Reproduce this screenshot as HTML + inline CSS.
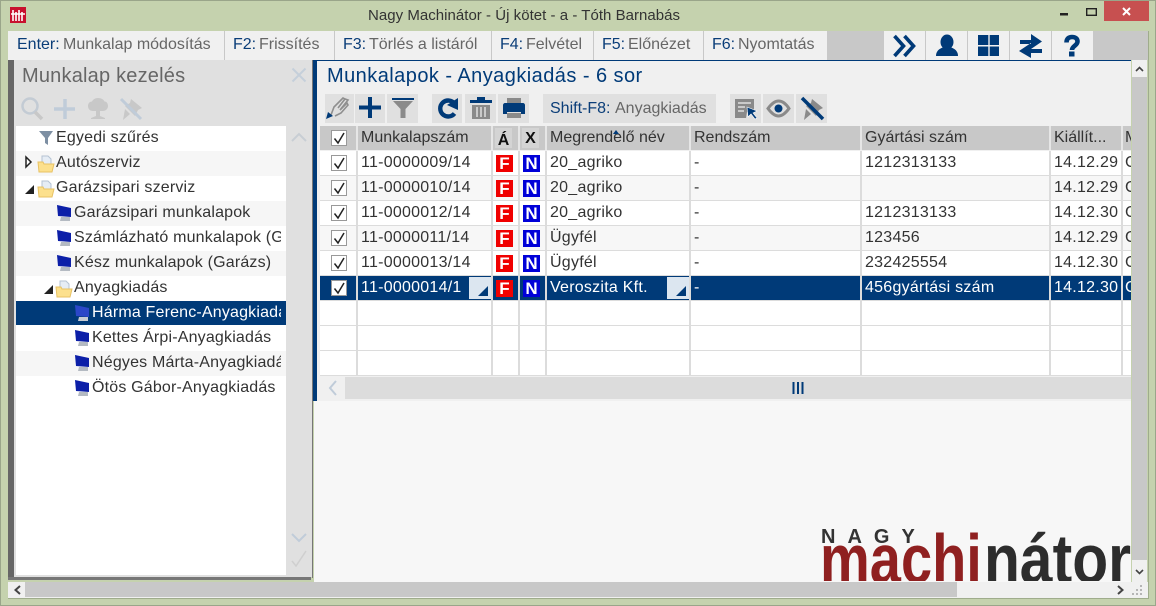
<!DOCTYPE html>
<html lang="hu"><head><meta charset="utf-8"><title>Nagy Machinátor</title>
<style>
html,body{margin:0;padding:0;width:1156px;height:606px;overflow:hidden}
body{position:relative;background:#c5d2ae;font-family:"Liberation Sans",sans-serif;font-size:16px;color:#333}
.a{position:absolute}
.t{position:absolute;white-space:nowrap;line-height:24px;height:24px}
.btn{position:absolute;top:31px;height:29px;background:#f0f0f0;line-height:28px;white-space:nowrap;color:#666}
.btn b{font-weight:normal;color:#0a3d78}
.btn span{position:absolute;top:0}
.tb{position:absolute;top:94px;height:29px;width:30px;background:#e0e0e0}
svg{position:absolute;display:block}
.row{position:absolute;left:16px;width:270px;height:25px;overflow:hidden;line-height:24px;white-space:nowrap;letter-spacing:.18px}
.row span{position:absolute;top:0;right:5px;overflow:hidden}
.row svg{top:4px}
.g{position:absolute;left:320px;width:811px;height:24px;background:#fff;border-bottom:1px solid #dcdcdc;overflow:hidden}
.g.alt{background:#f7f7f7}
.g.h{background:#c8c8c8;height:24px;border-bottom:0}
.g.s{background:#003a78;color:#fff}
.c{position:absolute;top:0;height:100%;line-height:23px;white-space:nowrap;overflow:hidden;letter-spacing:.25px}
.h .c{letter-spacing:0}
.v{position:absolute;top:0;width:2px;height:100%;background:#dcdcdc}
.h .v{background:#e6e6e6}
.cb{position:absolute;left:11px;top:4px;width:14px;height:14px;background:#fff;border:1px solid #999}
.F,.N{position:absolute;top:4px;width:17px;height:17px;font:bold 17px/17px "Liberation Sans",sans-serif;color:#fff;text-align:center}
.F{left:176px;background:#f00000}
.N{left:203px;background:#0000d8}
.dd{position:absolute;top:1px;width:23px;height:22px;background:#dce6f0}
.tri{position:absolute;top:10px;width:0;height:0;border-left:10px solid transparent;border-bottom:10px solid #003a78}
</style></head><body>
<div class="a" style="left:0;top:0;width:1156px;height:1px;background:#9aa58a"></div>
<div class="a" style="left:0;top:0;width:1px;height:606px;background:#9aa58a"></div>
<div class="a" style="right:0;top:0;width:1px;height:606px;background:#9aa58a"></div>
<div class="a" style="left:0;top:605px;width:1156px;height:1px;background:#9aa58a"></div>

<div class="a" style="left:10px;top:7px;width:16px;height:16px;background:#c8102e"></div>
<svg style="left:10px;top:7px" width="16" height="16"><path d="M1 7h14M3 3v11M6 5v9M9 3v11M12 5v9" stroke="#fff" stroke-width="1.6" fill="none"/></svg>
<div class="t" style="left:368px;top:4px;font-size:15px;color:#333;letter-spacing:.03px">Nagy Machinátor - Új kötet - a - Tóth Barnabás</div>

<svg style="left:1060px;top:6px" width="70" height="16"><rect x="0" y="7" width="8" height="2.500" fill="#222"/><rect x="26.700" y="2.700" width="9.600" height="6.600" fill="none" stroke="#222" stroke-width="1.400"/></svg>
<div class="a" style="left:1104px;top:1px;width:45px;height:20px;background:#c75050"></div>
<svg style="left:1121px;top:6px" width="12" height="11"><path d="M2 2l7 7M9 2l-7 7" stroke="#fff" stroke-width="2"/></svg>

<!-- top toolbar -->
<div class="a" style="left:8px;top:31px;width:1140px;height:29px;background:#c8c8c8"></div>
<div class="btn" style="left:8px;width:216px"><span style="left:9px"><b>Enter:</b></span><span style="left:55px">Munkalap módosítás</span></div>
<div class="btn" style="left:225px;width:109px"><span style="left:8px"><b>F2:</b></span><span style="left:34px">Frissítés</span></div>
<div class="btn" style="left:335px;width:156px"><span style="left:8px"><b>F3:</b></span><span style="left:34px">Törlés a listáról</span></div>
<div class="btn" style="left:492px;width:101px"><span style="left:8px"><b>F4:</b></span><span style="left:34px">Felvétel</span></div>
<div class="btn" style="left:594px;width:109px"><span style="left:8px"><b>F5:</b></span><span style="left:34px">Előnézet</span></div>
<div class="btn" style="left:704px;width:123px"><span style="left:8px"><b>F6:</b></span><span style="left:34px">Nyomtatás</span></div>
<div class="btn" style="left:884px;width:41px"></div>
<div class="btn" style="left:926px;width:41px"></div>
<div class="btn" style="left:968px;width:41px"></div>
<div class="btn" style="left:1010px;width:41px"></div>
<div class="btn" style="left:1052px;width:41px"></div>
<svg style="left:884px;top:31px" width="210" height="29">
<path d="M10.500 5l9 10-9 10M20.500 5l9 10-9 10" fill="none" stroke="#003a78" stroke-width="3.600"/>
<ellipse cx="63" cy="11" rx="6.500" ry="7.500" fill="#003a78"/><path d="M52 25c0-6 5-8 8-9h6c3 1 8 3 8 9z" fill="#003a78"/>
<path d="M94 4h10.300v10H94zM105.700 4H115v10h-9.300zM94 15.500h10.300V25H94zM105.700 15.500H115V25h-9.300z" fill="#003a78"/>
<path d="M136 9h11V3l11 7.500-11 7.500v-5h-11zM158 18h-11v-6l-12 8 12 7v-5h11z" fill="#003a78"/>
<path d="M182.500 11.500c0-4 2.500-5.500 5.500-5.500s5.500 1.500 5.500 4.500c0 4-5.500 4.500-5.500 8.500" fill="none" stroke="#003a78" stroke-width="4.600"/><path d="M185 20.500h5.500V25.500H185z" fill="#003a78"/>
</svg>

<!-- left panel -->
<div class="a" style="left:8px;top:60px;width:6px;height:518px;background:#666"></div>
<div class="a" style="left:14px;top:60px;width:298px;height:517px;background:#e0e0e0"></div>
<div class="a" style="left:312px;top:60px;width:1px;height:518px;background:#777"></div>
<div class="a" style="left:8px;top:577px;width:303px;height:3px;background:#777"></div>
<div class="a" style="left:22px;top:64px;font-size:20px;line-height:24px;color:#666;letter-spacing:.2px">Munkalap kezelés</div>
<svg style="left:290px;top:66px" width="18" height="18"><path d="M2.500 2.500l13 13M15.500 2.500l-13 13" stroke="#c5cfda" stroke-width="2"/></svg>
<svg style="left:18px;top:95px" width="130" height="28">
<circle cx="12" cy="11" r="7.500" fill="none" stroke="#c3cbd4" stroke-width="2.500"/><path d="M17 17l7 7" stroke="#c8c8c8" stroke-width="3.500"/>
<path d="M47 4v20M36 14h21" stroke="#c0ccd9" stroke-width="3.500"/>
<path d="M80 3c4 0 6 2 6.500 3.500 2.500 0 3.500 2.500 3.500 4.500 0 3-2.500 5-5 5H75c-3 0-5-2-5-5 0-2.500 1.500-4.500 4-4.500 1-2 3-3.500 6-3.500zM78 16h4v5l5 2v1H73v-1l5-2z" fill="#c8c8c8"/>
<path d="M113 4l11 9-4 2-3 6-10-10 5-3zM107 14l5 5-7 6z" fill="#c8c8c8"/><path d="M103 4l20 20" stroke="#c0ccd9" stroke-width="3"/>
</svg>

<div class="a" style="left:16px;top:126px;width:270px;height:449px;background:#fff"></div>
<div class="row" style="top:126px"><span style="left:40px">Egyedi szűrés</span><svg style="left:22px" width="16" height="16"><path d="M1 1h14L10 8v7l-3-2V8z" fill="#7d8fa3"/></svg></div>
<div class="row" style="top:151px;background:#f6f6f6"><span style="left:40px">Autószerviz</span><svg style="left:8px" width="9" height="14"><path d="M2 2l5 5-5 5z" fill="#fff" stroke="#222" stroke-width="1.500"/></svg><svg style="left:21px" width="18" height="18"><path d="M5 1h6l3 3v6H5z" fill="#e6edf5" stroke="#b5c3d3"/><path d="M1 7h5l1 2h10l-2 8H2z" fill="#fce08d" stroke="#e8c264"/></svg></div>
<div class="row" style="top:176px"><span style="left:40px">Garázsipari szerviz</span><svg style="left:9px;top:8px" width="10" height="11"><path d="M9 1v9H0z" fill="#222"/></svg><svg style="left:21px" width="18" height="18"><path d="M5 1h6l3 3v6H5z" fill="#e6edf5" stroke="#b5c3d3"/><path d="M1 7h5l1 2h10l-2 8H2z" fill="#fce08d" stroke="#e8c264"/></svg></div>
<div class="row" style="top:201px;background:#f6f6f6"><span style="left:58px">Garázsipari munkalapok</span><svg style="left:40px" width="17" height="17"><path d="M1 0l14 3v9L2 11z" fill="#0c1fa8"/><path d="M5 12h9v4H4z" fill="#b4bac2"/></svg></div>
<div class="row" style="top:226px"><span style="left:58px">Számlázható munkalapok (Garázs)</span><svg style="left:40px" width="17" height="17"><path d="M1 0l14 3v9L2 11z" fill="#0c1fa8"/><path d="M5 12h9v4H4z" fill="#b4bac2"/></svg></div>
<div class="row" style="top:251px;background:#f6f6f6"><span style="left:58px">Kész munkalapok (Garázs)</span><svg style="left:40px" width="17" height="17"><path d="M1 0l14 3v9L2 11z" fill="#0c1fa8"/><path d="M5 12h9v4H4z" fill="#b4bac2"/></svg></div>
<div class="row" style="top:276px"><span style="left:58px">Anyagkiadás</span><svg style="left:28px;top:8px" width="10" height="11"><path d="M9 1v9H0z" fill="#222"/></svg><svg style="left:39px" width="18" height="18"><path d="M5 1h6l3 3v6H5z" fill="#e6edf5" stroke="#b5c3d3"/><path d="M1 7h5l1 2h10l-2 8H2z" fill="#fce08d" stroke="#e8c264"/></svg></div>
<div class="row" style="top:301px;height:24px;background:#003a78;color:#fff"><span style="left:76px">Hárma Ferenc-Anyagkiadás</span><svg style="left:58px" width="17" height="17"><path d="M1 0l14 3v9L2 11z" fill="#2b47c8"/><path d="M5 12h9v4H4z" fill="#c6ccd4"/></svg></div>
<div class="row" style="top:326px"><span style="left:76px">Kettes Árpi-Anyagkiadás</span><svg style="left:58px" width="17" height="17"><path d="M1 0l14 3v9L2 11z" fill="#0c1fa8"/><path d="M5 12h9v4H4z" fill="#b4bac2"/></svg></div>
<div class="row" style="top:351px;background:#f6f6f6"><span style="left:76px">Négyes Márta-Anyagkiadás</span><svg style="left:58px" width="17" height="17"><path d="M1 0l14 3v9L2 11z" fill="#0c1fa8"/><path d="M5 12h9v4H4z" fill="#b4bac2"/></svg></div>
<div class="row" style="top:376px"><span style="left:76px">Ötös Gábor-Anyagkiadás</span><svg style="left:58px" width="17" height="17"><path d="M1 0l14 3v9L2 11z" fill="#0c1fa8"/><path d="M5 12h9v4H4z" fill="#b4bac2"/></svg></div>

<svg style="left:290px;top:130px" width="18" height="450">
<path d="M2 11l7-7 7 7" fill="none" stroke="#c8ced4" stroke-width="2"/>
<path d="M2 404l7 7 7-7" fill="none" stroke="#c0ccd9" stroke-width="2"/>
<path d="M2 431l4 5 10-15" fill="none" stroke="#cfcfcf" stroke-width="1.500"/>
</svg>

<!-- right panel -->
<div class="a" style="left:317px;top:61px;width:814px;height:340px;background:#f0f0f0"></div>
<div class="a" style="left:314px;top:401px;width:817px;height:181px;background:#f7f7f7"></div>
<div class="a" style="left:313px;top:60px;width:818px;height:1px;background:#003a78"></div>
<div class="a" style="left:313px;top:60px;width:4px;height:341px;background:#003a78"></div>
<div class="a" style="left:327px;top:64px;font-size:20px;line-height:24px;color:#003a78;letter-spacing:.45px">Munkalapok - Anyagkiadás - 6 sor</div>

<div class="tb" style="left:325px;width:29px"></div>
<div class="tb" style="left:355px;width:30px"></div>
<div class="tb" style="left:387px;width:31px"></div>
<div class="tb" style="left:432px;width:30px"></div>
<div class="tb" style="left:465px;width:31px"></div>
<div class="tb" style="left:498px;width:31px"></div>
<div class="tb" style="left:543px;width:173px"></div>
<div class="tb" style="left:730px;width:31px"></div>
<div class="tb" style="left:763px;width:31px"></div>
<div class="tb" style="left:796px;width:31px"></div>
<div class="t" style="left:550px;top:97px;color:#0a3d78">Shift-F8:</div>
<div class="t" style="left:615px;top:97px;color:#666">Anyagkiadás</div>
<svg style="left:325px;top:94px" width="505" height="29">
<path d="M6 21l3-8 9-9 2 1-7 9 7-9 3 1-8 10 7-7 1 2-7 8-6 3" fill="none" stroke="#8f8f8f" stroke-width="1.600"/><path d="M1 25l2-7 5 4z" fill="#003a78"/>
<path d="M45 3v21M34 13.500h22" stroke="#003a78" stroke-width="4"/>
<path d="M67 4h22v2H67z" fill="#003a78"/><path d="M68 7h20l-7.500 8v9h-5v-9z" fill="#8a8a8a"/>
<path d="M129.500 9.500A8 8 0 1 0 129.500 19.500" fill="none" stroke="#003a78" stroke-width="4.400"/><path d="M122 11l11-7v12z" fill="#003a78"/>
<path d="M145 6h22v3h-22zM152 3h8v3h-8z" fill="#003a78"/><path d="M147 11h18v14h-18z" fill="#8a8a8a"/><path d="M152 13v10M156 13v10M160 13v10" stroke="#e0e0e0" stroke-width="1.500"/>
<path d="M182 4h14v5h-14z" fill="#8a8a8a"/><path d="M180 9h18c1 0 2 1 2 2v9h-4v-2h-14v2h-4v-9c0-1 1-2 2-2z" fill="#003a78"/><path d="M182 19h14v5h-14z" fill="#8a8a8a"/>
<path d="M410 5h19v13h-7l-1 6h-11z" fill="#8a8a8a"/><path d="M413 9h13M413 13h7M413 17h6" stroke="#e0e0e0" stroke-width="1.500"/><path d="M422 13l10 4-4 2 4 5-2 1-4-5-3 3z" fill="#003a78" stroke="#fff" stroke-width=".6"/>
<path d="M443 14.500c4-5.500 7-7.500 10.500-7.500s7 2 10.500 7.500c-4 5.500-7 7.500-10.500 7.500s-6.500-2-10.500-7.500z" fill="none" stroke="#8a8a8a" stroke-width="3"/><circle cx="453.500" cy="14.500" r="4" fill="#003a78"/>
<path d="M487 5l11 9-4 2-3 6-10-10 5-3zM481 15l5 5-7 6z" fill="#8a8a8a"/><path d="M477 4l21 21" stroke="#003a78" stroke-width="3.500"/>
</svg>

<!-- grid -->
<div class="g h" style="top:126px">
<div class="cb" style="top:4px"></div>
<div class="c" style="left:41px">Munkalapszám</div>
<div class="a" style="left:175px;top:2px;width:17px;height:20px;background:#d4d4d4;font:bold 16px/25px 'Liberation Sans',sans-serif;text-align:center;color:#111">Á</div>
<div class="a" style="left:202px;top:2px;width:17px;height:20px;background:#d4d4d4;font:bold 16px/22px 'Liberation Sans',sans-serif;text-align:center;color:#111">X</div>
<div class="c" style="left:230px">Megrendelő név</div>
<div class="a" style="left:293px;top:4px;width:0;height:0;border-left:3px solid transparent;border-right:3px solid transparent;border-bottom:4px solid #003a78"></div>
<div class="c" style="left:374px">Rendszám</div>
<div class="c" style="left:545px">Gyártási szám</div>
<div class="c" style="left:734px">Kiállít...</div>
<div class="c" style="left:805px">M</div>
<i class="v" style="left:36px"></i><i class="v" style="left:171px"></i><i class="v" style="left:198px"></i><i class="v" style="left:225px"></i><i class="v" style="left:369px"></i><i class="v" style="left:540px"></i><i class="v" style="left:729px"></i><i class="v" style="left:801px"></i>
</div>
<div class="g" style="top:151px"><div class="cb"></div><div class="c" style="left:41px">11-0000009/14</div><div class="F">F</div><div class="N">N</div><div class="c" style="left:230px">20_agriko</div><div class="c" style="left:374px">-</div><div class="c" style="left:545px">1212313133</div><div class="c" style="left:734px">14.12.29</div><div class="c" style="left:805px">C</div><i class="v" style="left:36px"></i><i class="v" style="left:171px"></i><i class="v" style="left:198px"></i><i class="v" style="left:225px"></i><i class="v" style="left:369px"></i><i class="v" style="left:540px"></i><i class="v" style="left:729px"></i><i class="v" style="left:801px"></i></div>
<div class="g alt" style="top:176px"><div class="cb"></div><div class="c" style="left:41px">11-0000010/14</div><div class="F">F</div><div class="N">N</div><div class="c" style="left:230px">20_agriko</div><div class="c" style="left:374px">-</div><div class="c" style="left:734px">14.12.29</div><div class="c" style="left:805px">C</div><i class="v" style="left:36px"></i><i class="v" style="left:171px"></i><i class="v" style="left:198px"></i><i class="v" style="left:225px"></i><i class="v" style="left:369px"></i><i class="v" style="left:540px"></i><i class="v" style="left:729px"></i><i class="v" style="left:801px"></i></div>
<div class="g" style="top:201px"><div class="cb"></div><div class="c" style="left:41px">11-0000012/14</div><div class="F">F</div><div class="N">N</div><div class="c" style="left:230px">20_agriko</div><div class="c" style="left:374px">-</div><div class="c" style="left:545px">1212313133</div><div class="c" style="left:734px">14.12.30</div><div class="c" style="left:805px">C</div><i class="v" style="left:36px"></i><i class="v" style="left:171px"></i><i class="v" style="left:198px"></i><i class="v" style="left:225px"></i><i class="v" style="left:369px"></i><i class="v" style="left:540px"></i><i class="v" style="left:729px"></i><i class="v" style="left:801px"></i></div>
<div class="g alt" style="top:226px"><div class="cb"></div><div class="c" style="left:41px">11-0000011/14</div><div class="F">F</div><div class="N">N</div><div class="c" style="left:230px">Ügyfél</div><div class="c" style="left:374px">-</div><div class="c" style="left:545px">123456</div><div class="c" style="left:734px">14.12.29</div><div class="c" style="left:805px">C</div><i class="v" style="left:36px"></i><i class="v" style="left:171px"></i><i class="v" style="left:198px"></i><i class="v" style="left:225px"></i><i class="v" style="left:369px"></i><i class="v" style="left:540px"></i><i class="v" style="left:729px"></i><i class="v" style="left:801px"></i></div>
<div class="g" style="top:251px"><div class="cb"></div><div class="c" style="left:41px">11-0000013/14</div><div class="F">F</div><div class="N">N</div><div class="c" style="left:230px">Ügyfél</div><div class="c" style="left:374px">-</div><div class="c" style="left:545px">232425554</div><div class="c" style="left:734px">14.12.30</div><div class="c" style="left:805px">C</div><i class="v" style="left:36px"></i><i class="v" style="left:171px"></i><i class="v" style="left:198px"></i><i class="v" style="left:225px"></i><i class="v" style="left:369px"></i><i class="v" style="left:540px"></i><i class="v" style="left:729px"></i><i class="v" style="left:801px"></i></div>
<div class="g s" style="top:276px"><div class="cb"></div><div class="c" style="left:41px">11-0000014/1</div><div class="dd" style="left:149px"></div><div class="tri" style="left:158px"></div><div class="F">F</div><div class="N">N</div><div class="c" style="left:230px">Veroszita Kft.</div><div class="dd" style="left:347px"></div><div class="tri" style="left:356px"></div><div class="c" style="left:374px">-</div><div class="c" style="left:545px">456gyártási szám</div><div class="c" style="left:734px">14.12.30</div><div class="c" style="left:805px">C</div><i class="v" style="left:36px"></i><i class="v" style="left:171px"></i><i class="v" style="left:198px"></i><i class="v" style="left:225px"></i><i class="v" style="left:369px"></i><i class="v" style="left:540px"></i><i class="v" style="left:729px"></i><i class="v" style="left:801px"></i></div>
<div class="g" style="top:301px"><i class="v" style="left:36px"></i><i class="v" style="left:171px"></i><i class="v" style="left:198px"></i><i class="v" style="left:225px"></i><i class="v" style="left:369px"></i><i class="v" style="left:540px"></i><i class="v" style="left:729px"></i><i class="v" style="left:801px"></i></div>
<div class="g" style="top:326px"><i class="v" style="left:36px"></i><i class="v" style="left:171px"></i><i class="v" style="left:198px"></i><i class="v" style="left:225px"></i><i class="v" style="left:369px"></i><i class="v" style="left:540px"></i><i class="v" style="left:729px"></i><i class="v" style="left:801px"></i></div>
<div class="g" style="top:351px"><i class="v" style="left:36px"></i><i class="v" style="left:171px"></i><i class="v" style="left:198px"></i><i class="v" style="left:225px"></i><i class="v" style="left:369px"></i><i class="v" style="left:540px"></i><i class="v" style="left:729px"></i><i class="v" style="left:801px"></i></div>

<svg style="left:331px;top:130px" width="20" height="170"><path d="M3.500 8.500l3.500 4.500 6-10M3.500 33.500l3.500 4.500 6-10M3.500 58.500l3.500 4.500 6-10M3.500 83.500l3.500 4.500 6-10M3.500 108.500l3.500 4.500 6-10M3.500 133.500l3.500 4.500 6-10M3.500 158.500l3.500 4.500 6-10" fill="none" stroke="#222" stroke-width="1.500"/></svg>

<!-- grid horizontal scrollbar -->
<div class="a" style="left:345px;top:377px;width:786px;height:22px;background:#dcdcdc"></div>
<svg style="left:325px;top:379px" width="480" height="18"><path d="M11 2L5 9l6 7" fill="none" stroke="#c0ccd9" stroke-width="2"/><path d="M468.500 3v12M473 3v12M477.500 3v12" stroke="#003a78" stroke-width="2"/></svg>

<!-- logo -->
<div class="a" style="left:821px;top:527px;font:bold 20px/20px 'Liberation Sans',sans-serif;letter-spacing:12px;color:#333;white-space:nowrap">NAGY</div>
<div class="a" style="left:820px;top:524px;width:311px;height:57px;overflow:hidden;white-space:nowrap;font:bold 70px/70px 'Liberation Sans',sans-serif">
<div class="a" style="left:0;top:0;transform:scaleX(.8);transform-origin:0 0;color:#8f2020">machi</div>
<div class="a" style="left:164px;top:0;transform:scaleX(.84);transform-origin:0 0;color:#2d2d2d">nátor</div>
</div>

<!-- main vertical scrollbar -->
<div class="a" style="left:1132px;top:60px;width:15px;height:522px;background:#c8c8c8"></div>
<div class="a" style="left:1132px;top:60px;width:15px;height:17px;background:#f0f0f0"></div>
<div class="a" style="left:1132px;top:560px;width:15px;height:22px;background:#f0f0f0"></div>
<svg style="left:1132px;top:60px" width="15" height="530"><path d="M4 11l3.500-3.500L11 11" fill="none" stroke="#444" stroke-width="1.600"/><path d="M4 510l3.500 3.500L11 510" fill="none" stroke="#444" stroke-width="1.600"/></svg>
<div class="a" style="left:1148px;top:31px;width:1px;height:567px;background:#9fac8c"></div>

<!-- main horizontal scrollbar -->
<div class="a" style="left:8px;top:582px;width:1140px;height:16px;background:#f0f0f0"></div>
<div class="a" style="left:25px;top:582px;width:932px;height:15px;background:#c8c8c8"></div>
<svg style="left:8px;top:582px" width="1140" height="16"><path d="M12 4L7.500 8l4.500 4" fill="none" stroke="#444" stroke-width="2"/><path d="M1110 4l4.500 4-4.500 4" fill="none" stroke="#444" stroke-width="2"/><path d="M1132 12h2M1128 12h2M1124 12h2M1132 8h2M1128 8h2M1132 4h2" stroke="#b5b5b5" stroke-width="2"/></svg>
<div class="a" style="left:8px;top:598px;width:1141px;height:1px;background:#9fac8c"></div>
</body></html>
